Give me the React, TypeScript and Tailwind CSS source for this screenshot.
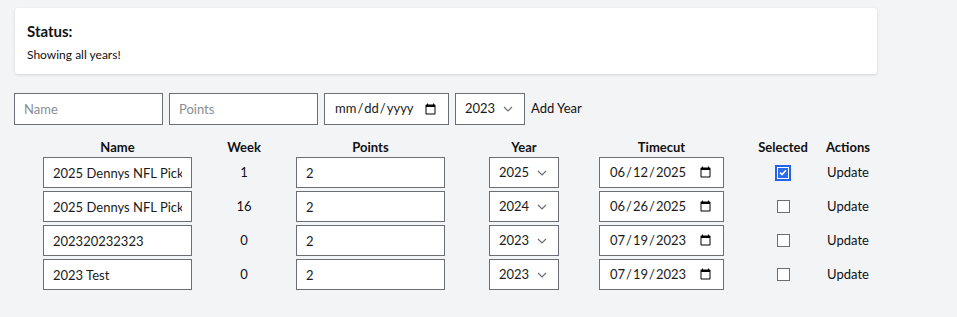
import React, { useState } from 'react';

type Pick = {
  name: string;
  week: number;
  points: string;
  year: string;
  timecut: string;
  selected: boolean;
};

const initialPicks: Pick[] = [
  { name: '2025 Dennys NFL Picker', week: 1, points: '2', year: '2025', timecut: '2025-06-12', selected: true },
  { name: '2025 Dennys NFL Picker', week: 16, points: '2', year: '2024', timecut: '2025-06-26', selected: false },
  { name: '202320232323', week: 0, points: '2', year: '2023', timecut: '2023-07-19', selected: false },
  { name: '2023 Test', week: 0, points: '2', year: '2023', timecut: '2023-07-19', selected: false },
];

const years = ['2023', '2024', '2025'];

const fieldClass =
  'h-full w-full border border-[#6b6f75] bg-white px-[9px] text-[13px] text-[#1a1a1a] outline-none placeholder:text-[#8a8d92]';

const Chevron = () => (
  <svg className="pointer-events-none absolute right-[12px] top-1/2 -translate-y-1/2" width="10" height="6" viewBox="0 0 10 6" fill="none">
    <path d="M1 1l4 4 4-4" stroke="#6b6f75" strokeWidth="1.2" />
  </svg>
);

const YearSelect = ({ value, onChange }: { value: string; onChange: (v: string) => void }) => (
  <div className="relative h-full w-[70px]">
    <select
      value={value}
      onChange={(e) => onChange(e.target.value)}
      className="h-full w-full appearance-none border border-[#6b6f75] bg-white pl-[9px] text-[13px] text-[#1a1a1a] outline-none"
    >
      {years.map((y) => (
        <option key={y}>{y}</option>
      ))}
    </select>
    <Chevron />
  </div>
);

const Check = ({ checked, onToggle }: { checked: boolean; onToggle: () => void }) =>
  checked ? (
    <button onClick={onToggle} className="flex h-[16px] w-[16px] items-center justify-center border-2 border-[#2563eb] bg-white p-[1px]">
      <span className="flex h-full w-full items-center justify-center bg-[#2b6de8]">
        <svg width="8" height="7" viewBox="0 0 8 7" fill="none">
          <path d="M1 3.6l2 2L7 1.2" stroke="white" strokeWidth="1.5" />
        </svg>
      </span>
    </button>
  ) : (
    <button onClick={onToggle} className="h-[13px] w-[13px] border border-[#6b6f75] bg-white" />
  );

const App: React.FC = () => {
  const [picks, setPicks] = useState<Pick[]>(initialPicks);
  const [newYear, setNewYear] = useState('2023');

  const update = (i: number, patch: Partial<Pick>) =>
    setPicks((p) => p.map((row, idx) => (idx === i ? { ...row, ...patch } : row)));

  return (
    <div className="min-h-screen bg-[#f3f4f6] pt-[8px] font-['Lato',sans-serif] text-[#111]">
      <div className="ml-[15px] w-[862px] rounded-[3px] bg-white px-[12px] pt-[13px] pb-[11px] shadow-[0_1px_3px_rgba(0,0,0,0.14)]">
        <h2 className="text-[15px] leading-[20px] font-bold">Status:</h2>
        <p className="mt-[6px] text-[12px] leading-[16px]">Showing all years!</p>
      </div>

      {/* add year form */}
      <div className="mt-[19px] ml-[14px] flex h-[32px] items-center gap-[6px]">
        <div className="h-full w-[149px]">
          <input placeholder="Name" className={fieldClass} />
        </div>
        <div className="h-full w-[149px]">
          <input placeholder="Points" className={fieldClass} />
        </div>
        <div className="h-full w-[125px]">
          <input type="date" className={fieldClass} />
        </div>
        <YearSelect value={newYear} onChange={setNewYear} />
        <span className="text-[13px]">Add Year</span>
      </div>

      {/* picks table */}
      <div className="mt-[13px] ml-[43px] grid grid-cols-[149px_104px_149px_154px_143px_82px_48px] text-[13px]">
        <div className="h-[19px] text-center font-bold">Name</div>
        <div className="h-[19px] text-center font-bold">Week</div>
        <div className="h-[19px] text-center font-bold">Points</div>
        <div className="ml-[44px] h-[19px] w-[70px] text-center font-bold">Year</div>
        <div className="h-[19px] w-[125px] text-center font-bold">Timecut</div>
        <div className="h-[19px] text-center font-bold">Selected</div>
        <div className="h-[19px] text-center font-bold">Actions</div>

        {picks.map((row, i) => (
          <React.Fragment key={i}>
            <div className="mb-[3px] h-[31px]">
              <input value={row.name} onChange={(e) => update(i, { name: e.target.value })} className={fieldClass} />
            </div>
            <div className="mb-[3px] flex h-[31px] items-center justify-center">{row.week}</div>
            <div className="mb-[3px] h-[31px]">
              <input value={row.points} onChange={(e) => update(i, { points: e.target.value })} className={fieldClass} />
            </div>
            <div className="mb-[3px] ml-[44px] h-[31px]">
              <YearSelect value={row.year} onChange={(v) => update(i, { year: v })} />
            </div>
            <div className="mb-[3px] h-[31px] w-[125px]">
              <input type="date" value={row.timecut} onChange={(e) => update(i, { timecut: e.target.value })} className={fieldClass} />
            </div>
            <div className="mb-[3px] flex h-[31px] items-center justify-center">
              <Check checked={row.selected} onToggle={() => update(i, { selected: !row.selected })} />
            </div>
            <div className="mb-[3px] flex h-[31px] items-center justify-center">
              <button className="text-[13px]">Update</button>
            </div>
          </React.Fragment>
        ))}
      </div>
    </div>
  );
};

export default App;
